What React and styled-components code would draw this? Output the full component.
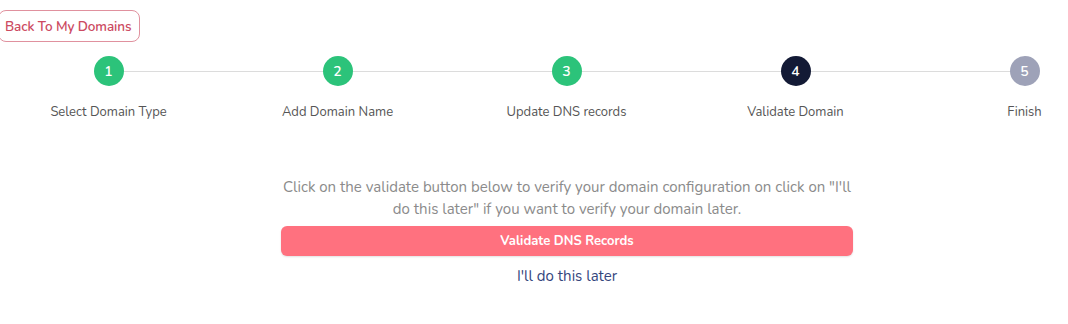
import React from "react";
import styled, { createGlobalStyle } from "styled-components";

const GlobalStyle = createGlobalStyle`
	html, body {
		margin: 0;
		padding: 0;
		background: #ffffff;
		overflow: hidden;
	}
	body {
		font-family: "Nunito", "Open Sans", sans-serif;
	}
`;

const Page = styled.div`
	width: 1068px;
	height: 324px;
	overflow: hidden;
	padding-top: 10px;
	box-sizing: border-box;
`;

const BackButton = styled.button`
	margin-left: -2px;
	height: 32px;
	padding: 0 8px 0 6px;
	border: 1px solid #e0919e;
	border-radius: 8px;
	background: #ffffff;
	color: #cc4a61;
	font-family: inherit;
	font-size: 13.5px;
	font-weight: 600;
	letter-spacing: -0.1px;
	cursor: pointer;
`;

const Stepper = styled.div`
	display: grid;
	grid-template-columns: repeat(5, 229px);
	margin-left: -6px;
	margin-top: 14px;
`;

const Step = styled.div`
	position: relative;
	display: flex;
	flex-direction: column;
	align-items: center;
`;

const Line = styled.div`
	position: absolute;
	top: 15px;
	left: 50%;
	width: 100%;
	height: 1px;
	background: #dcdcdc;
`;

const Circle = styled.div`
	position: relative;
	z-index: 1;
	width: 30px;
	height: 30px;
	border-radius: 50%;
	display: flex;
	align-items: center;
	justify-content: center;
	color: #ffffff;
	font-size: 14px;
	font-weight: 600;
	background: ${(p) =>
		p.$state === "done" ? "#2cc37a" : p.$state === "active" ? "#131a35" : "#9ea2b8"};
`;

const Label = styled.div`
	margin-top: 17px;
	font-size: 13px;
	color: #555555;
	white-space: nowrap;
`;

const Body = styled.div`
	width: 574px;
	margin: 55px 0 0 280px;
	display: flex;
	flex-direction: column;
	align-items: center;
`;

const Info = styled.p`
	margin: 0;
	text-align: center;
	font-size: 15px;
	line-height: 22px;
	color: #8b8b8b;
`;

const ValidateButton = styled.button`
	width: 572px;
	height: 30px;
	margin-top: 6px;
	border: none;
	border-radius: 6px;
	background: #ff717f;
	color: #ffffff;
	font-family: inherit;
	font-size: 13px;
	font-weight: 700;
	box-shadow: 0 1px 2px rgba(0, 0, 0, 0.12);
	cursor: pointer;
`;

const LaterLink = styled.a`
	margin-top: 10px;
	font-size: 15px;
	color: #34467d;
	cursor: pointer;
`;

const steps = [
	{ n: 1, label: "Select Domain Type", state: "done" },
	{ n: 2, label: "Add Domain Name", state: "done" },
	{ n: 3, label: "Update DNS records", state: "done" },
	{ n: 4, label: "Validate Domain", state: "active" },
	{ n: 5, label: "Finish", state: "todo" },
];

export default () => {
	return (
		<Page>
			<GlobalStyle />
			<BackButton>Back To My Domains</BackButton>
			<Stepper>
				{steps.map((s, i) => (
					<Step key={s.n}>
						{i < steps.length - 1 && <Line />}
						<Circle $state={s.state}>{s.n}</Circle>
						<Label>{s.label}</Label>
					</Step>
				))}
			</Stepper>
			<Body>
				<Info>
					Click on the validate button below to verify your domain configuration on
					click on "I'll do this later" if you want to verify your domain later.
				</Info>
				<ValidateButton>Validate DNS Records</ValidateButton>
				<LaterLink>I'll do this later</LaterLink>
			</Body>
		</Page>
	);
};
